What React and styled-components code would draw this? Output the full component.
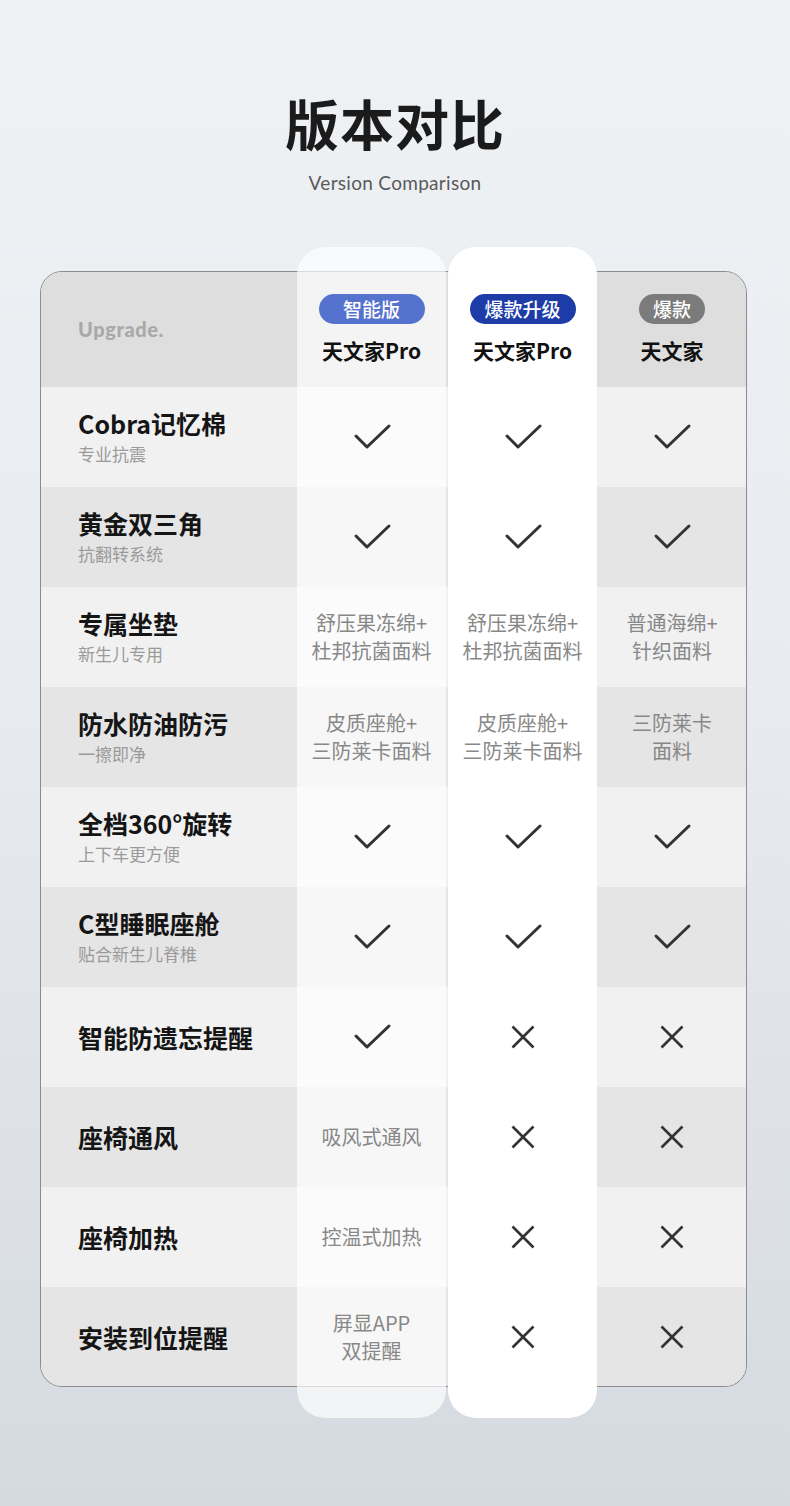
import styled, { createGlobalStyle } from "styled-components";

const GlobalStyle = createGlobalStyle`
  html, body {
    margin: 0;
    padding: 0;
  }
  body {
    font-family: "Noto Sans CJK SC", "Noto Sans", sans-serif;
  }
`;

const CHECK = "check";
const CROSS = "cross";

const versions = [
  { badge: "智能版", color: "#5672cf", name: "天文家Pro" },
  { badge: "爆款升级", color: "#1e3ca8", name: "天文家Pro" },
  { badge: "爆款", color: "#7b7b7b", name: "天文家" },
];

const features = [
  { title: "Cobra记忆棉", sub: "专业抗震", values: [CHECK, CHECK, CHECK] },
  { title: "黄金双三角", sub: "抗翻转系统", values: [CHECK, CHECK, CHECK] },
  {
    title: "专属坐垫",
    sub: "新生儿专用",
    values: ["舒压果冻绵+\n杜邦抗菌面料", "舒压果冻绵+\n杜邦抗菌面料", "普通海绵+\n针织面料"],
  },
  {
    title: "防水防油防污",
    sub: "一擦即净",
    values: ["皮质座舱+\n三防莱卡面料", "皮质座舱+\n三防莱卡面料", "三防莱卡\n面料"],
  },
  { title: "全档360°旋转", sub: "上下车更方便", values: [CHECK, CHECK, CHECK] },
  { title: "C型睡眠座舱", sub: "贴合新生儿脊椎", values: [CHECK, CHECK, CHECK] },
  { title: "智能防遗忘提醒", values: [CHECK, CROSS, CROSS] },
  { title: "座椅通风", values: ["吸风式通风", CROSS, CROSS] },
  { title: "座椅加热", values: ["控温式加热", CROSS, CROSS] },
  { title: "安装到位提醒", values: ["屏显APP\n双提醒", CROSS, CROSS] },
];

// grid columns: label | col1 | gap | col2 | col3
const valueColumns = [2, 4, 5];

const Page = styled.div`
  min-height: 1506px;
  background: linear-gradient(180deg, #eff2f5 0%, #e8ebef 45%, #d5dae1 100%);
  padding-top: 91px;
  box-sizing: border-box;
`;

const Heading = styled.header`
  display: flex;
  flex-direction: column;
  align-items: center;
`;

const Title = styled.h1`
  margin: 0;
  font-size: 54px;
  line-height: 64px;
  font-weight: 700;
  color: #1b1b1b;
  letter-spacing: 1px;
`;

const Subtitle = styled.p`
  margin: 16px 0 0;
  font-family: Lato, "Open Sans", sans-serif;
  font-weight: 400;
  font-size: 19px;
  line-height: 24px;
  color: #5a5a5a;
  letter-spacing: 0.3px;
`;

const Board = styled.section`
  margin: 52px 0 0 40px;
  width: 707px;
  display: grid;
  grid-template-columns: 257px 149px 2px 149px 150px;
  grid-template-rows: 24px 116px repeat(10, 100px) 31px;
`;

const Frame = styled.div`
  grid-column: 1 / -1;
  grid-row: 2 / 13;
  border: 1px solid #8c8c8c;
  border-radius: 22px;
  overflow: hidden;
  display: grid;
  grid-template-rows: 115px repeat(10, 100px);
`;

const Stripe = styled.div`
  background: ${(p) => (p.$head ? "#dedede" : p.$dark ? "#e5e5e5" : "#f1f1f1")};
`;

const ColumnCard = styled.div`
  grid-column: ${(p) => p.$col};
  grid-row: 1 / -1;
  border-radius: 28px;
  background: ${(p) => (p.$solid ? "#ffffff" : "rgba(255, 255, 255, 0.68)")};
`;

const Cell = styled.div`
  grid-row: ${(p) => p.$row};
  grid-column: ${(p) => p.$col};
  display: flex;
  flex-direction: column;
  align-items: center;
  justify-content: center;
`;

const LabelCell = styled(Cell)`
  align-items: flex-start;
  padding-left: 38px;
`;

const Upgrade = styled.span`
  font-family: Lato, "Noto Sans", sans-serif;
  font-weight: 900;
  font-size: 20px;
  color: #a9a9a9;
  letter-spacing: 0.6px;
`;

const Badge = styled.span`
  height: 30px;
  min-width: ${(p) => (p.$wide ? "106px" : "0")};
  padding: 0 14px;
  box-sizing: border-box;
  border-radius: 15px;
  background: ${(p) => p.$color};
  color: #fff;
  font-size: 19px;
  font-weight: 500;
  line-height: 30px;
  text-align: center;
`;

const VersionName = styled.span`
  margin-top: 12px;
  font-size: 21px;
  line-height: 28px;
  font-weight: 600;
  color: #111;
`;

const FeatureTitle = styled.span`
  font-size: 25px;
  line-height: 30px;
  font-weight: 700;
  color: #151515;
`;

const FeatureSub = styled.span`
  margin-top: 4px;
  font-size: 17px;
  line-height: 24px;
  color: #9a9a9a;
`;

const ValueText = styled.span`
  font-size: 20px;
  line-height: 28px;
  color: #888;
  text-align: center;
  white-space: pre-line;
`;

const Check = () => (
  <svg width="40" height="32" viewBox="0 0 40 32" fill="none">
    <path d="M4 15 L15 26 L37 5" stroke="#333" strokeWidth="3" strokeLinecap="round" strokeLinejoin="round" />
  </svg>
);

const Cross = () => (
  <svg width="24" height="24" viewBox="0 0 24 24" fill="none">
    <path d="M1.5 1.5 L22.5 22.5 M22.5 1.5 L1.5 22.5" stroke="#333" strokeWidth="2.6" />
  </svg>
);

const Value = ({ value }) => {
  if (value === CHECK) return <Check />;
  if (value === CROSS) return <Cross />;
  return <ValueText>{value}</ValueText>;
};

export default function App() {
  return (
    <Page>
      <GlobalStyle />
      <Heading>
        <Title>版本对比</Title>
        <Subtitle>Version Comparison</Subtitle>
      </Heading>

      <Board>
        <Frame>
          <Stripe $head />
          {features.map((f, i) => (
            <Stripe key={f.title} $dark={i % 2 === 1} />
          ))}
        </Frame>
        <ColumnCard $col={2} />
        <ColumnCard $col={4} $solid />

        <LabelCell $row={2} $col={1}>
          <Upgrade>Upgrade.</Upgrade>
        </LabelCell>
        {versions.map((v, i) => (
          <Cell key={v.badge} $row={2} $col={valueColumns[i]}>
            <Badge $color={v.color} $wide={i < 2}>
              {v.badge}
            </Badge>
            <VersionName>{v.name}</VersionName>
          </Cell>
        ))}

        {features.map((f, r) => [
          <LabelCell key={f.title} $row={r + 3} $col={1}>
            <FeatureTitle>{f.title}</FeatureTitle>
            {f.sub && <FeatureSub>{f.sub}</FeatureSub>}
          </LabelCell>,
          ...f.values.map((v, c) => (
            <Cell key={`${f.title}-${c}`} $row={r + 3} $col={valueColumns[c]}>
              <Value value={v} />
            </Cell>
          )),
        ])}
      </Board>
    </Page>
  );
}
